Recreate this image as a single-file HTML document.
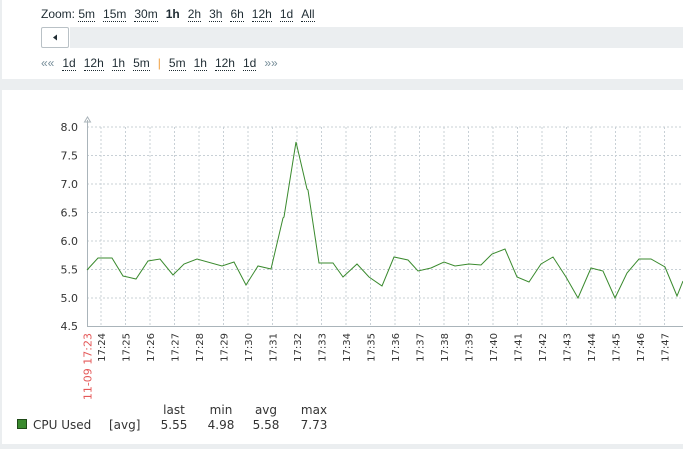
<!DOCTYPE html>
<html><head><style>
body{margin:0;width:683px;height:449px;overflow:hidden;background:#ebeef0;font-family:"Liberation Sans",Arial,sans-serif;font-size:12px;color:#1f2c33}
.p1{position:absolute;left:2px;top:0;width:681px;height:79px;background:#fff}
.p2{position:absolute;left:2px;top:90px;width:681px;height:354px;background:#fff}
.l{position:absolute;white-space:nowrap}
.l span{border-bottom:1px dotted #1f2c33;margin-right:8px}
.btn{position:absolute;left:41px;top:27px;width:28px;height:21px;border:1px solid #b9c1c6;background:#fff;border-radius:2px;box-sizing:border-box}
.bar{position:absolute;left:70px;top:27px;width:613px;height:21px;background:#ebeef0}
</style></head><body>
<div class="p1"></div>
<div class="l" style="left:41px;top:7px">Zoom: <span>5m</span><span>15m</span><span>30m</span><b style="margin-right:8px">1h</b><span>2h</span><span>3h</span><span>6h</span><span>12h</span><span>1d</span><span>All</span></div>
<div class="bar"></div>
<div class="btn"><svg width="28" height="21" style="position:absolute;left:-1px;top:-1px"><polygon points="12,10.5 16,7.5 16,13.5" fill="#1f2c33"/></svg></div>
<div class="l" style="left:41px;top:56px"><b style="color:#768d99;font-weight:normal;margin-right:8px">««</b><span>1d</span><span>12h</span><span>1h</span><span>5m</span><b style="color:#f0a040;font-weight:normal;margin-right:8px">|</b><span>5m</span><span>1h</span><span>12h</span><span>1d</span><b style="color:#768d99;font-weight:normal">»»</b></div>
<div class="p2"></div>
<svg width="683" height="449" style="position:absolute;left:0;top:0" font-family="DejaVu Sans,sans-serif" font-size="11" fill="#333">
<g stroke="#c8d0d6" stroke-dasharray="2,2">
<line x1="87" x2="683" y1="127" y2="127"/><line x1="87" x2="683" y1="155.5" y2="155.5"/><line x1="87" x2="683" y1="184" y2="184"/><line x1="87" x2="683" y1="212.5" y2="212.5"/><line x1="87" x2="683" y1="241" y2="241"/><line x1="87" x2="683" y1="269.5" y2="269.5"/><line x1="87" x2="683" y1="298" y2="298"/>
</g>
<g stroke="#c8d0d6" stroke-dasharray="2,2">
<line x1="101" x2="101" y1="127" y2="326"/><line x1="125.5" x2="125.5" y1="127" y2="326"/><line x1="150" x2="150" y1="127" y2="326"/><line x1="174.5" x2="174.5" y1="127" y2="326"/><line x1="199" x2="199" y1="127" y2="326"/><line x1="223.5" x2="223.5" y1="127" y2="326"/><line x1="248" x2="248" y1="127" y2="326"/><line x1="272.5" x2="272.5" y1="127" y2="326"/><line x1="297" x2="297" y1="127" y2="326"/><line x1="321.5" x2="321.5" y1="127" y2="326"/><line x1="346" x2="346" y1="127" y2="326"/><line x1="370.5" x2="370.5" y1="127" y2="326"/><line x1="395" x2="395" y1="127" y2="326"/><line x1="419.5" x2="419.5" y1="127" y2="326"/><line x1="444" x2="444" y1="127" y2="326"/><line x1="468.5" x2="468.5" y1="127" y2="326"/><line x1="493" x2="493" y1="127" y2="326"/><line x1="517.5" x2="517.5" y1="127" y2="326"/><line x1="542" x2="542" y1="127" y2="326"/><line x1="566.5" x2="566.5" y1="127" y2="326"/><line x1="591" x2="591" y1="127" y2="326"/><line x1="615.5" x2="615.5" y1="127" y2="326"/><line x1="640" x2="640" y1="127" y2="326"/><line x1="664.5" x2="664.5" y1="127" y2="326"/>
</g>
<line x1="87.5" y1="120" x2="87.5" y2="327" stroke="#aab4ba"/>
<line x1="87" y1="326.5" x2="683" y2="326.5" stroke="#aab4ba"/>
<polygon points="84.5,122 87.5,117 90.5,122" fill="none" stroke="#aab4ba"/>
<polyline fill="none" stroke="#3a8a2e" stroke-width="1" points="87,270 98,258 112,258 123,276 136,279 148,261 160,259 173,275 184,264 197,259 222,266 234,262 246,285 258,266 271,269 283,218 284,217 296,142 307,189 308,190 319,263 333,263 343,277 357,264 369,277 382,286 394,257 408,260 418,271 431,268 444,262 455,266 469,264 481,265 492,254 505,249 517,277 529,282 541,264 553,257 566,277 578,298 591,268 603,271 615,298 627,273 639,259 651,259 665,267 677,296 683,281"/>
<g text-anchor="end"><text x="78" y="131">8.0</text><text x="78" y="159.5">7.5</text><text x="78" y="188">7.0</text><text x="78" y="216.5">6.5</text><text x="78" y="245">6.0</text><text x="78" y="273.5">5.5</text><text x="78" y="302">5.0</text><text x="78" y="330">4.5</text>
<text transform="translate(91.5,333) rotate(-90)" fill="#e45959">11-09 17:23</text>
<g font-size="10">
<text transform="translate(105,333) rotate(-90)">17:24</text><text transform="translate(129.5,333) rotate(-90)">17:25</text><text transform="translate(154,333) rotate(-90)">17:26</text><text transform="translate(178.5,333) rotate(-90)">17:27</text><text transform="translate(203,333) rotate(-90)">17:28</text><text transform="translate(227.5,333) rotate(-90)">17:29</text><text transform="translate(252,333) rotate(-90)">17:30</text><text transform="translate(276.5,333) rotate(-90)">17:31</text><text transform="translate(301,333) rotate(-90)">17:32</text><text transform="translate(325.5,333) rotate(-90)">17:33</text><text transform="translate(350,333) rotate(-90)">17:34</text><text transform="translate(374.5,333) rotate(-90)">17:35</text><text transform="translate(399,333) rotate(-90)">17:36</text><text transform="translate(423.5,333) rotate(-90)">17:37</text><text transform="translate(448,333) rotate(-90)">17:38</text><text transform="translate(472.5,333) rotate(-90)">17:39</text><text transform="translate(497,333) rotate(-90)">17:40</text><text transform="translate(521.5,333) rotate(-90)">17:41</text><text transform="translate(546,333) rotate(-90)">17:42</text><text transform="translate(570.5,333) rotate(-90)">17:43</text><text transform="translate(595,333) rotate(-90)">17:44</text><text transform="translate(619.5,333) rotate(-90)">17:45</text><text transform="translate(644,333) rotate(-90)">17:46</text><text transform="translate(668.5,333) rotate(-90)">17:47</text>
</g></g>
<rect x="17.5" y="419.5" width="9" height="9" fill="#3a8a2e" stroke="#1f4a18"/>
<text x="33" y="429" font-size="12">CPU Used</text>
<text x="109" y="429" font-size="12">[avg]</text>
<g font-size="12" text-anchor="middle"><text x="174" y="414">last</text><text x="174" y="429">5.55</text><text x="221" y="414">min</text><text x="221" y="429">4.98</text><text x="266" y="414">avg</text><text x="266" y="429">5.58</text><text x="314" y="414">max</text><text x="314" y="429">7.73</text></g>
</svg>
</body></html>
